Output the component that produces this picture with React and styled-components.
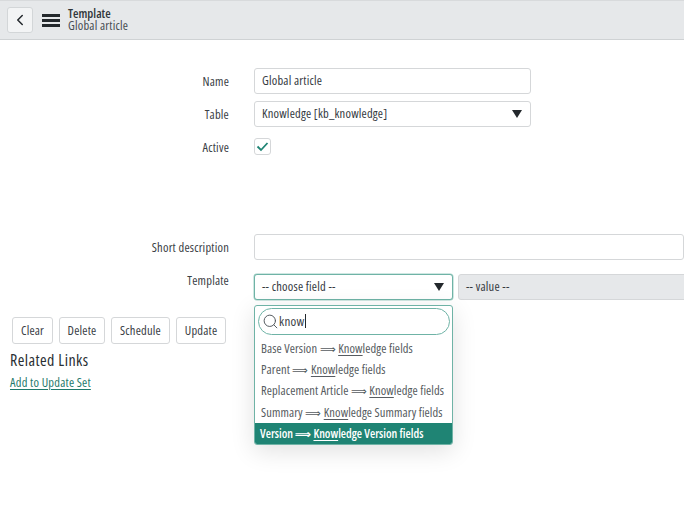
import React from 'react';
import styled, {createGlobalStyle} from 'styled-components';
import {ChevronLeft, Search} from 'lucide-react';

const Global = createGlobalStyle`
  html, body {
    margin: 0;
    padding: 0;
    background: #fff;
  }
  body {
    font-family: "Open Sans", "Liberation Sans", sans-serif;
    font-stretch: 75%;
    font-size: 12.5px;
    letter-spacing: 0.2px;
    color: #2e3338;
    overflow: hidden;
  }
`

const Page = styled.div`
  width: 684px;
  height: 524px;
  overflow: hidden;
`

const Header = styled.header`
  height: 40px;
  box-sizing: border-box;
  background: #e6e8ea;
  border-top: 1px solid #d8dadc;
  border-bottom: 1px solid #cfd2d4;
  display: flex;
  align-items: center;
  padding-left: 7px;
`

const BackButton = styled.button`
  width: 26px;
  height: 26px;
  box-sizing: border-box;
  padding: 0;
  border: 1px solid #d3d6d8;
  border-radius: 3px;
  background: #f3f4f5;
  color: #23282c;
  display: flex;
  align-items: center;
  justify-content: center;
`

const Burger = styled.div`
  width: 18px;
  margin-left: 9px;
  display: flex;
  flex-direction: column;
  gap: 2px;
  span {
    height: 3px;
    background: #23282c;
  }
`

const Titles = styled.div`
  margin-left: 8px;
  line-height: 12px;
`

const Title = styled.div`
  font-weight: 600;
  letter-spacing: 0;
  color: #30363a;
`

const Subtitle = styled.div`
  color: #474d52;
`

const Form = styled.main`
  padding-top: 28px;
`

const Row = styled.div`
  display: grid;
  grid-template-columns: 229px 430px;
  column-gap: 25px;
  height: 26px;
  align-items: center;
  margin-top: ${p => p.$top || 7}px;
  &:first-child {
    margin-top: 0;
  }
`

const Label = styled.label`
  text-align: right;
  color: #3a4045;
  position: relative;
  top: ${p => p.$lift || 0}px;
`

const Input = styled.div`
  box-sizing: border-box;
  height: 26px;
  width: ${p => p.$width || '100%'};
  border: 1px solid #d5d7d9;
  border-radius: 3px;
  display: flex;
  align-items: center;
  justify-content: space-between;
  padding: 0 7px 1px;
  background: #fff;
  color: #353a3f;
`

const Arrow = styled.i`
  width: 0;
  height: 0;
  margin: 1px 1px 0 0;
  border-left: 5px solid transparent;
  border-right: 5px solid transparent;
  border-top: 8px solid #23282c;
`

const Check = styled.div`
  box-sizing: border-box;
  width: 17px;
  height: 17px;
  border: 1px solid #d5d7d9;
  border-radius: 3px;
  display: flex;
  align-items: center;
  justify-content: center;
  position: relative;
  top: -1px;
`

const Fields = styled.div`
  display: flex;
  gap: 5px;
  position: relative;
`

const ChooseField = styled(Input)`
  flex: none;
  width: 199px;
  border: 1px solid #6fb3a6;
  box-shadow: 0 0 0 0.5px #9fcfc5;
`

const ValueField = styled(Input)`
  flex: none;
  width: 300px;
  background: #e6e8ea;
  border-color: #d5d7d9;
`

const Dropdown = styled.div`
  position: absolute;
  left: 0;
  top: 31px;
  width: 199px;
  height: 140px;
  box-sizing: border-box;
  border: 1px solid #6fb3a6;
  border-radius: 3px;
  background: #fff;
  box-shadow: 0 6px 24px rgba(0, 0, 0, 0.12);
  overflow: hidden;
  padding-top: 2px;
`

const SearchBox = styled.div`
  box-sizing: border-box;
  width: 192px;
  height: 27px;
  margin: 0 0 0 3px;
  border: 1px solid #6fb3a6;
  border-radius: 14px;
  display: flex;
  align-items: center;
  padding: 0 0 1px 3px;
  gap: 0;
  font-size: 13px;
  letter-spacing: 0.3px;
  color: #3a4045;
  svg {
    color: #555b60;
  }
  b {
    display: inline-block;
    width: 1px;
    height: 14px;
    background: #23282c;
    vertical-align: -2px;
  }
`

const Options = styled.ul`
  list-style: none;
  margin: 3px 0 0;
  padding: 0;
`

const Option = styled.li`
  height: 21.2px;
  line-height: 21px;
  padding-left: ${p => p.$active ? 5 : 6}px;
  white-space: nowrap;
  color: ${p => p.$active ? '#fff' : '#565b60'};
  background: ${p => p.$active ? '#1f8474' : 'transparent'};
  font-weight: ${p => p.$active ? 600 : 400};
  font-size: ${p => p.$active ? 12 : 12.5}px;
  letter-spacing: ${p => p.$active ? 0 : 0.1}px;
  u {
    text-underline-offset: 2px;
  }
`

const Implies = styled.span`
  font-size: 10.5px;
`

const Actions = styled.div`
  display: flex;
  gap: 6px;
  margin: 17px 0 0 12px;
`

const Button = styled.button`
  height: 27px;
  padding: 0;
  width: ${p => p.$width}px;
  box-sizing: border-box;
  border: 1px solid #d5d7d9;
  border-radius: 3px;
  background: #fff;
  font: inherit;
  letter-spacing: inherit;
  color: #3a4045;
`

const Related = styled.section`
  margin: 7px 0 0 10px;
`

const RelatedTitle = styled.h2`
  margin: 0;
  font-size: 16px;
  font-weight: 400;
  letter-spacing: 0.45px;
  line-height: 18px;
  color: #2a2f33;
`

const RelatedLink = styled.a`
  display: block;
  margin-top: 5px;
  color: #1f7a6c;
  text-decoration: underline;
  text-underline-offset: 2px;
`

const options = [
  ['Base Version', 'ledge fields'],
  ['Parent', 'ledge fields'],
  ['Replacement Article', 'ledge fields'],
  ['Summary', 'ledge Summary fields'],
  ['Version', 'ledge Version fields'],
]

export default function App() {
  return (
    <Page>
      <Global />
      <Header>
        <BackButton><ChevronLeft size={18} strokeWidth={2} /></BackButton>
        <Burger><span /><span /><span /></Burger>
        <Titles>
          <Title>Template</Title>
          <Subtitle>Global article</Subtitle>
        </Titles>
      </Header>
      <Form>
        <Row>
          <Label>Name</Label>
          <Input $width="277px">Global article</Input>
        </Row>
        <Row>
          <Label>Table</Label>
          <Input $width="277px">Knowledge [kb_knowledge]<Arrow /></Input>
        </Row>
        <Row>
          <Label>Active</Label>
          <Check>
            <svg width="13" height="11" viewBox="0 0 13 11">
              <path d="M1.5 5.5 L5 9 L11.5 2" fill="none" stroke="#1f8474" strokeWidth="1.8" />
            </svg>
          </Check>
        </Row>
        <Row $top={74}>
          <Label>Short description</Label>
          <Input />
        </Row>
        <Row $top={14}>
          <Label $lift={-7}>Template</Label>
          <Fields>
            <ChooseField>-- choose field --<Arrow /></ChooseField>
            <ValueField>-- value --</ValueField>
            <Dropdown>
              <SearchBox>
                <Search size={17} strokeWidth={1.4} />
                <span>know<b /></span>
              </SearchBox>
              <Options>
                {options.map(([field, rest], i) => (
                  <Option key={field} $active={i === options.length - 1}>
                    {field} <Implies>⟹</Implies> <u>Know</u>{rest}
                  </Option>
                ))}
              </Options>
            </Dropdown>
          </Fields>
        </Row>
      </Form>
      <Actions>
        <Button $width={41}>Clear</Button>
        <Button $width={46}>Delete</Button>
        <Button $width={59}>Schedule</Button>
        <Button $width={50}>Update</Button>
      </Actions>
      <Related>
        <RelatedTitle>Related Links</RelatedTitle>
        <RelatedLink>Add to Update Set</RelatedLink>
      </Related>
    </Page>
  )
}
